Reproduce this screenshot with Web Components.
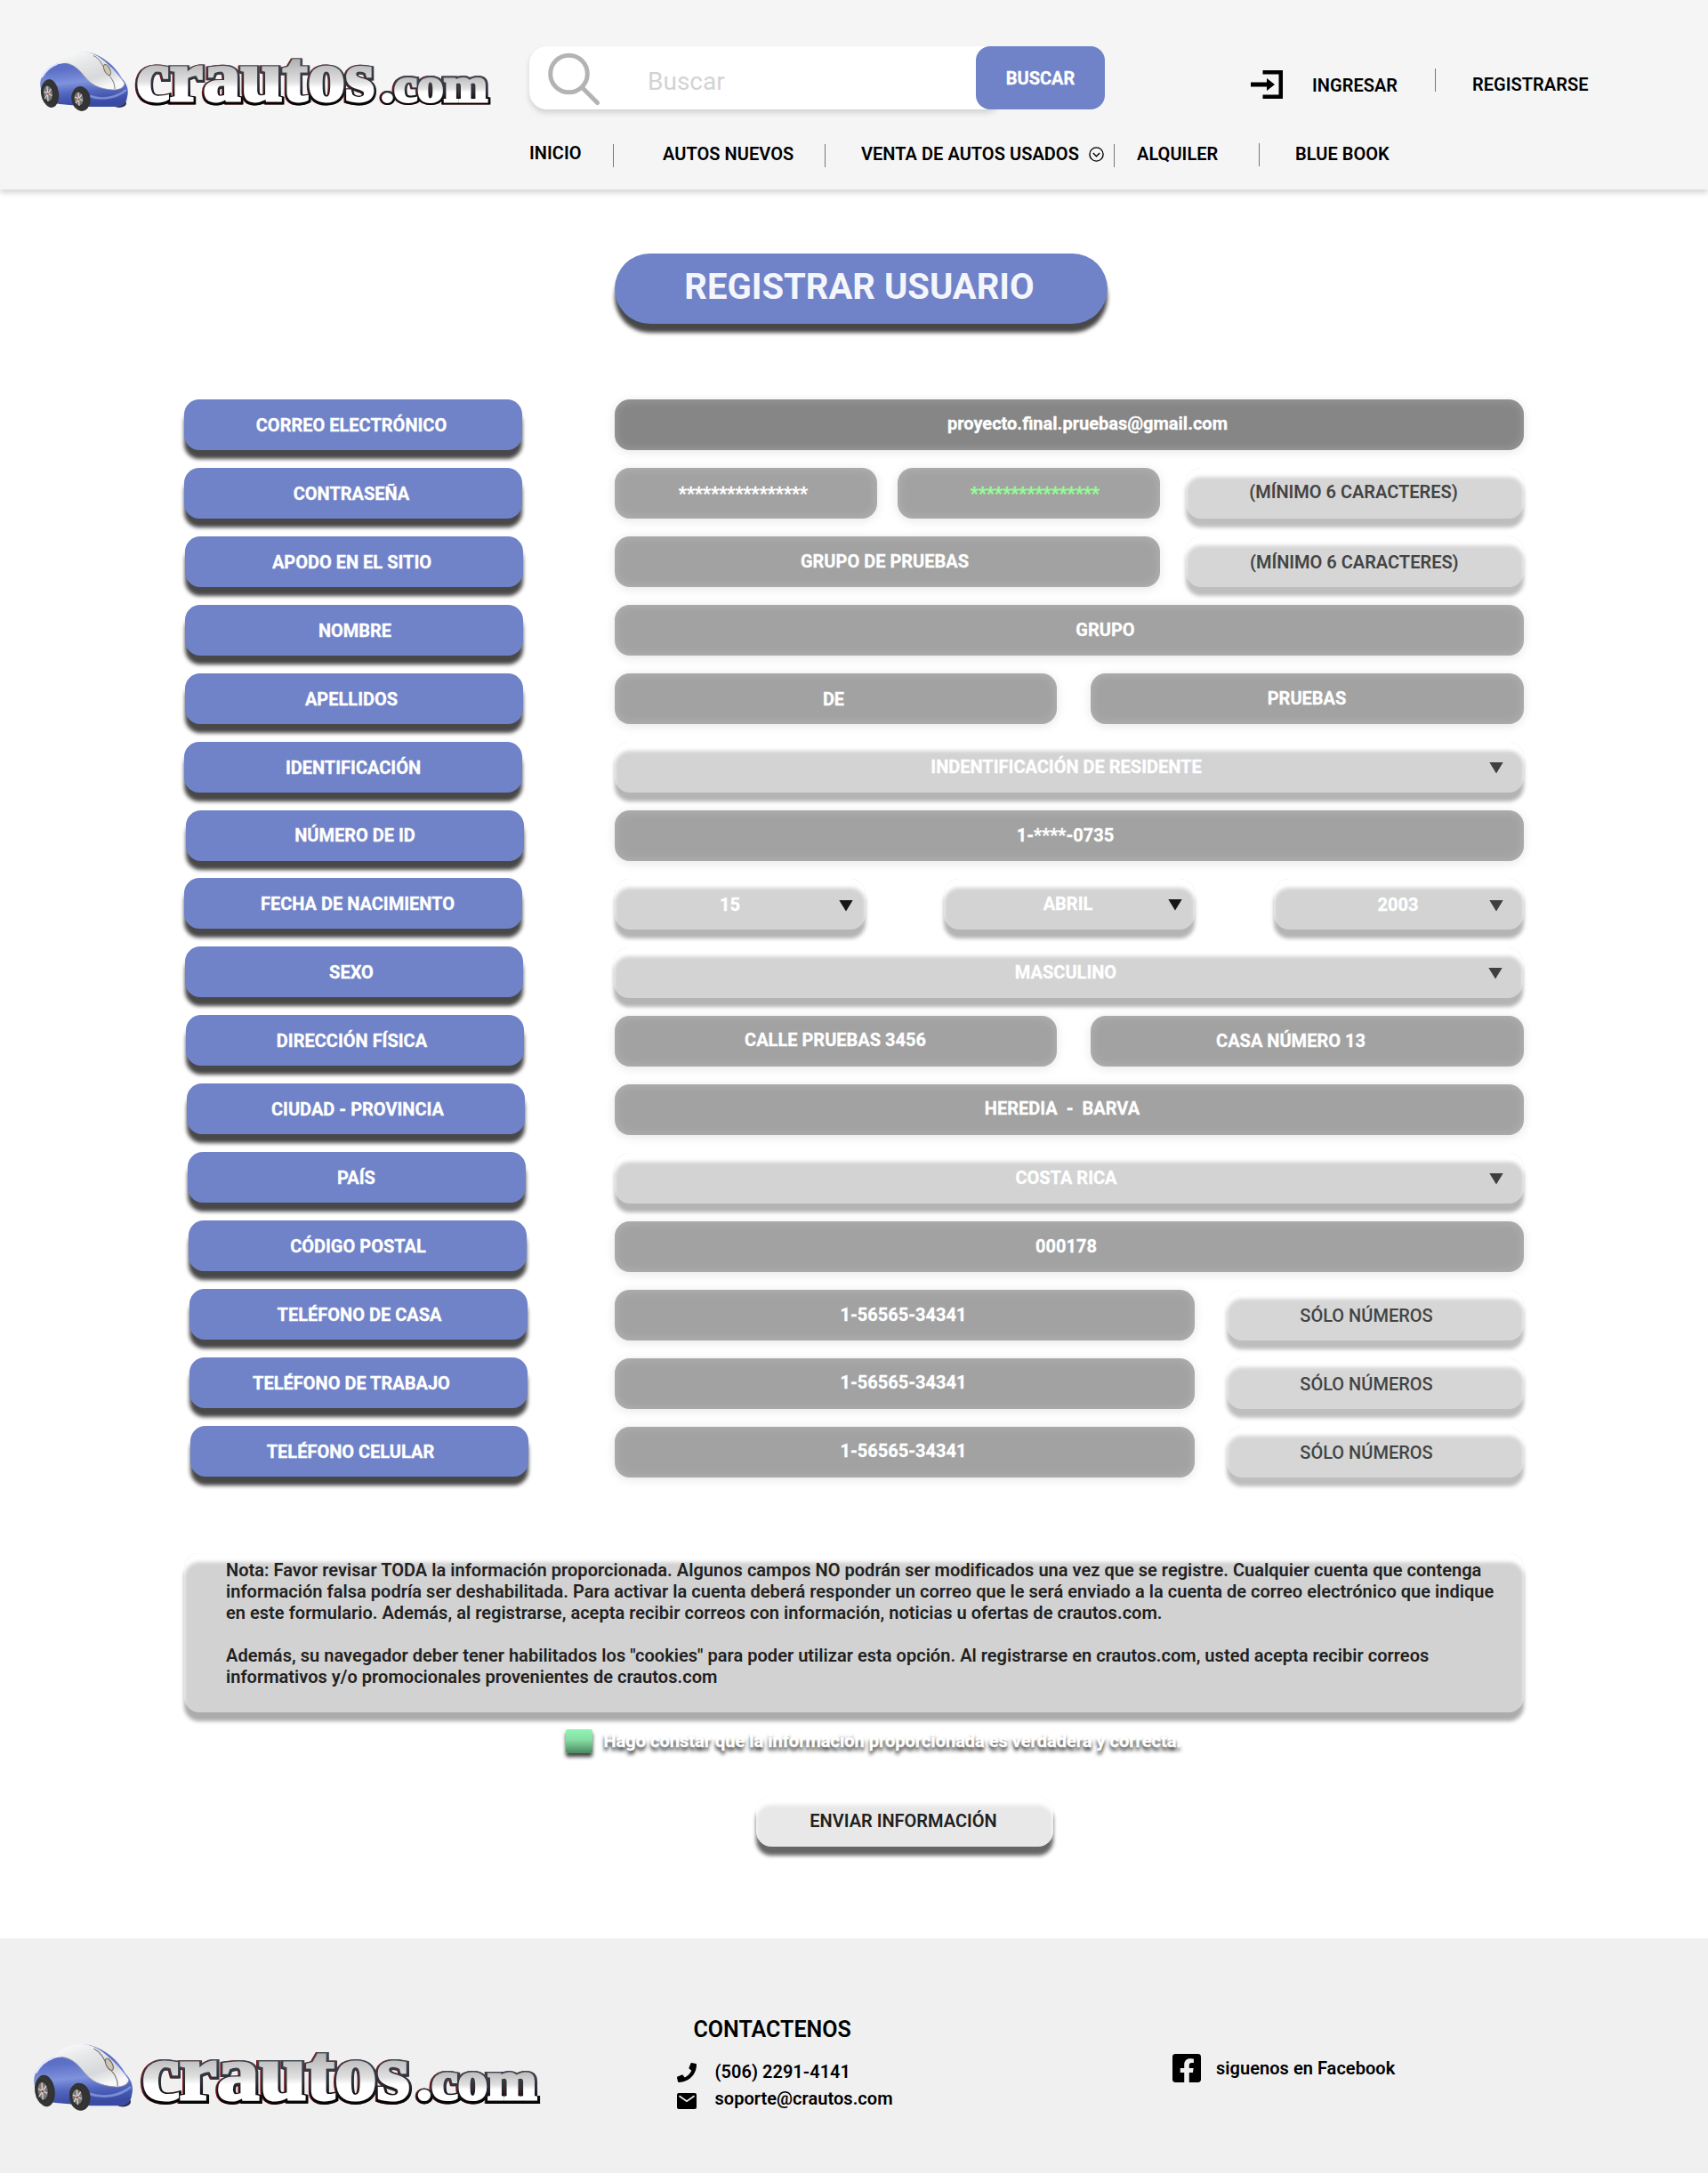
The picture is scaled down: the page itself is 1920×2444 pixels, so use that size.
<!DOCTYPE html>
<html lang="es">
<head>
<meta charset="utf-8">
<title>crautos.com - Registrar usuario</title>
<style>
  html, body { margin: 0; background: #fff; }
  body { width: 1920px; font: 600 20px/24px Roboto, sans-serif; color: #000; }
</style>
</head>
<body>
<cr-page></cr-page>

<script>
const define = (name, html) => {
  const t = document.createElement('template');
  t.innerHTML = html;
  customElements.define(name, class extends HTMLElement {
    constructor() {
      super();
      this.attachShadow({ mode: 'open' }).append(t.content.cloneNode(true));
    }
    connectedCallback() {
      // numeric attributes become CSS lengths
      for (const a of this.attributes)
        if (/^-?[\d.]+$/.test(a.value)) this.style.setProperty('--' + a.name, a.value + 'px');
    }
  });
};

/* Brand: car shaped like a mouse, plus wordmark */
define('cr-logo', `
<style>
  :host { display: block; width: var(--w, 508px); height: var(--h, 68px); flex: none; }
  svg { display: block; width: 100%; height: 100%; overflow: visible; }
  text { font-family: "Liberation Serif", serif; font-weight: 700; }
</style>
<svg viewBox="0 0 508 68" preserveAspectRatio="none">
  <defs>
    <linearGradient id="m" x1="0" y1="0" x2="0" y2="1"><stop offset="0" stop-color="#e8e8e8"/><stop offset=".3" stop-color="#b4b4b4"/><stop offset=".56" stop-color="#e0e0e0"/><stop offset=".64" stop-color="#fff"/><stop offset="1" stop-color="#fff"/></linearGradient>
    <linearGradient id="k" x1="0" y1="0" x2="0" y2="1"><stop offset=".2" stop-color="#4a515e"/><stop offset=".6" stop-color="#2c2f37"/><stop offset=".8" stop-color="#050505"/></linearGradient>
    <linearGradient id="b" x1="0" y1="0" x2=".15" y2="1"><stop offset="0" stop-color="#5a6cc0"/><stop offset=".35" stop-color="#5c70c8"/><stop offset=".6" stop-color="#7f92dc"/><stop offset=".78" stop-color="#5267bf"/><stop offset="1" stop-color="#3a4ba4"/></linearGradient>
    <linearGradient id="w" x1="0" y1="0" x2=".6" y2="1"><stop offset="0" stop-color="#fff"/><stop offset=".4" stop-color="#e6e7e8"/><stop offset=".75" stop-color="#d6d8da"/><stop offset="1" stop-color="#f8f8f8"/></linearGradient>
    <radialGradient id="t"><stop offset="0" stop-color="#888"/><stop offset=".55" stop-color="#777"/><stop offset=".68" stop-color="#2e2e2e"/><stop offset="1" stop-color="#3a3a3a"/></radialGradient>
  </defs>
  <ellipse cx="89" cy="58" rx="8" ry="5" fill="#302a38"/>
  <path d="M1 31C5 22 12 17 20 13C30 2 44-1 56 1C70 5 84 15 92 30C98 36 100 44 98 51C97 58 94 61 88 62H56L22 59C8 57-3 44 1 31Z" fill="url(#b)"/>
  <path d="M18 15C26 4 36 0 48 0C58 0 68 6 76 14C84 21 91 30 95 36C94 41 89 43 82 43C66 42 57 37 50 28C43 19 37 14 28 13C24 13 21 14 18 15Z" fill="url(#w)"/>
  <path d="M95 36C94 41 89 43 82 43C66 42 57 37 50 28C43 19 37 14 28 13" fill="none" stroke="#8d93ab" stroke-width=".8"/>
  <path d="M2 29C7 20 13 16 19 14" fill="none" stroke="#dfe5ff" stroke-width="2"/>
  <path d="M60 4.500C67 8 70 14 74 23C80 29 84 34 84 42" fill="none" stroke="#777" stroke-width="1"/>
  <ellipse cx="75.500" cy="20.500" rx="3" ry="6.500" transform="rotate(-28 75.500 20.500)" fill="#cdc5b3" stroke="#6f685c" stroke-width="1"/>
  <path d="M56 50C70 55 86 52 97 43" fill="none" stroke="#93a4e6" stroke-width="2.500" opacity=".7"/>
  <ellipse cx="11.500" cy="47" rx="9.500" ry="16" transform="rotate(-8 11.500 47)" fill="#333"/>
  <ellipse cx="9" cy="47" rx="8" ry="14" transform="rotate(-8 9 47)" fill="url(#t)"/>
  <ellipse cx="46" cy="53" rx="10.500" ry="14" transform="rotate(-8 46 53)" fill="#333"/>
  <ellipse cx="43.500" cy="53" rx="8" ry="12" transform="rotate(-8 43.500 53)" fill="url(#t)"/>
  <g stroke="#ddd" stroke-width="1.100"><path d="M8 39L9 56M4.500 45L13.500 49.500M5 53L12.500 42"/><path d="M43 46L44 61M39 51L48 55M40 58L47 48"/></g>
  <g fill="#c22"><circle cx="8.800" cy="47.500" r="1.100"/><circle cx="43.500" cy="53.500" r="1.100"/></g>
  <g stroke-linejoin="miter" stroke-miterlimit="3" transform="translate(-.5 .8)">
    <g fill="#7c1518" stroke="#7c1518" stroke-width="7"><text x="108" y="55.500" font-size="80" textLength="268" lengthAdjust="spacingAndGlyphs">crautos</text><text x="383" y="55.500" font-size="54" textLength="120" lengthAdjust="spacingAndGlyphs">.com</text></g>
    <g fill="url(#k)" stroke="url(#k)" stroke-width="7" aria-hidden="true"><text x="109" y="55.500" font-size="80" textLength="268" lengthAdjust="spacingAndGlyphs">crautos</text><text x="384" y="55.500" font-size="54" textLength="120" lengthAdjust="spacingAndGlyphs">.com</text></g>
    <g fill="url(#m)" stroke="url(#m)" stroke-width="2.800" aria-hidden="true"><text x="108.500" y="54.500" font-size="80" textLength="268" lengthAdjust="spacingAndGlyphs">crautos</text><text x="383.500" y="54.800" font-size="54" textLength="120" lengthAdjust="spacingAndGlyphs">.com</text></g>
  </g>
</svg>`);

/* Text with a fixed leading space */
define('cr-text', `
<style>:host { display: block; flex: none; white-space: nowrap; letter-spacing: .04px; margin: var(--mt, 0) 0 0 var(--ml, 0); width: var(--w, auto); }</style><slot></slot>`);

define('cr-sep', `
<style>:host { display: block; flex: none; width: 1px; height: 26px; background: #777; margin: var(--mt, 0) 0 0 var(--ml, 0); }</style>`);

define('cr-search', `
<style>
  :host { display: flex; width: 647px; height: 71px; flex: none; }
  .box { display: flex; width: 532px; margin-right: -30px; box-sizing: border-box; background: #fff; border-radius: 20px; box-shadow: 0 4px 6px rgba(0,0,0,.14); padding-left: 20px; }
  svg { margin-top: 7px; flex: none; }
  .hint { font: 400 28px/33px Roboto, sans-serif; color: #d3d3d3; margin: 23px 0 0 53px; }
  button { position: relative; width: 145px; height: 71px; border: 0; border-radius: 16px; padding: 1px 0 0; background: #7083c8; color: #fff; font: 700 20px/24px Roboto, sans-serif; -webkit-text-stroke: .3px; }
</style>
<div class="box">
  <svg width="60" height="60" viewBox="0 0 60 60" fill="none" stroke="#b3b3b3" stroke-width="5"><circle cx="24.500" cy="24" r="20.800"/><path d="M39 39L56.500 56.500" stroke-linecap="round"/></svg>
  <div class="hint">Buscar</div>
</div>
<button>BUSCAR</button>`);

define('cr-header', `
<style>
  :host { display: flex; height: 213px; background: #f5f5f5; box-shadow: 0 4px 6px rgba(0,0,0,.16); box-sizing: border-box; position: relative; }
  cr-logo { margin: 58px 0 0 45px; }
  .col { margin: 52px 0 0 42px; }
  .row { display: flex; align-items: flex-start; }
  .top { height: 109px; }
  svg { flex: none; }
</style>
<cr-logo></cr-logo>
<div class="col">
  <div class="row top">
    <cr-search></cr-search>
    <svg style="margin:27px 0 0 164px" width="36" height="32" viewBox="0 0 36 32"><path d="M13.500 0H36V32H13.500V27.500H31.500V4.500H13.500ZM0 13.500H18V9L27 16L18 23V18.500H0Z"/></svg>
    <cr-text ml="33" mt="32" w="97">INGRESAR</cr-text>
    <cr-sep ml="41" mt="25"></cr-sep>
    <cr-text ml="41" mt="31">REGISTRARSE</cr-text>
  </div>
  <div class="row">
    <cr-text ml="0" mt="-1" w="59">INICIO</cr-text>
    <cr-sep ml="35" mt="1"></cr-sep>
    <cr-text ml="55" w="149">AUTOS NUEVOS</cr-text>
    <cr-sep ml="33" mt="1"></cr-sep>
    <cr-text ml="40" w="246">VENTA DE AUTOS USADOS</cr-text>
    <svg style="margin:4px 0 0 10px" width="17" height="17" viewBox="0 0 17 17" fill="none" stroke="#000" stroke-width="1.400"><circle cx="8.500" cy="8.500" r="7.600"/><path d="M4.800 7L8.500 10.700L12.200 7"/></svg>
    <cr-sep ml="11" mt="1"></cr-sep>
    <cr-text ml="25" w="92">ALQUILER</cr-text>
    <cr-sep ml="45" mt="0"></cr-sep>
    <cr-text ml="40">BLUE BOOK</cr-text>
  </div>
</div>`);

define('cr-title', `
<style>
  :host { display: block; width: 554px; height: 79px; box-sizing: border-box; margin: 72px 0 0 691px; padding-top: 14px; border-radius: 40px; background: #7083c8; box-shadow: 0 10px 4px #484848; }
  h1 { margin: 0; width: 550px; text-align: center; font: 700 40px/48px Roboto, sans-serif; color: #f5f6fc; }
</style>
<h1><slot></slot></h1>`);

/* Pill: --cx is the centre of its text, --ty the distance of the text from the top */
define('cr-pill', `
<style>
  :host { display: block; flex: none; position: relative; box-sizing: border-box; height: 57px; width: var(--w, 1022px); margin-left: var(--ml, 0); border-radius: 17px; color: #fff; font-weight: 700; -webkit-text-stroke: .3px;
    background: #a2a2a2; box-shadow: inset 0 0 12px rgba(255,255,255,.2), 0 2px 12px rgba(0,0,0,.1); }
  :host([kind=dark]) { background: #868686; }
  :host([kind=label]) { background: #7083c8; box-shadow: 0 10px 4px #484848; }
  :host([kind=hint]) { background: #d6d6d6; color: #444; font-weight: 500; -webkit-text-stroke: 0; box-shadow: inset 0 10px 4px #fff, 0 10px 4px #bebebe; }
  :host([kind=select]) { background: #d3d3d3; box-shadow: inset 0 10px 4px #fff, 0 10px 4px #b4b4b4; }
  :host([kind=send]) { background: #e8e8e8; color: #212121; font-weight: 600; -webkit-text-stroke: 0; box-shadow: inset 0 10px 4px #fff, 0 10px 4px #666; }
  div { width: calc(2 * var(--cx)); padding-top: var(--ty, 17px); text-align: center; white-space: pre; }
  i { display: none; position: absolute; width: 16px; height: 13px; left: var(--arrow); top: calc(var(--ty) + 6.500px); background: var(--tone, #3f3f3f); clip-path: polygon(0 0, 100% 0, 50% 100%); }
  :host([arrow]) i { display: block; }
</style>
<div><slot></slot></div><i></i>`);

define('cr-row', `
<style>
  :host { display: grid; grid-template-columns: 484px 1023px; height: 57px; }
  .f { display: flex; }
</style>
<slot name="label"></slot><div class="f"><slot></slot></div>`);

define('cr-form', `
<style>
  :host { display: flex; flex-direction: column; gap: 20px; margin: 85px 0 0 207px; }
  .up { margin-top: -1px; }
</style>
<cr-row><cr-pill slot="label" kind="label" w="380" cx="188">CORREO ELECTRÓNICO</cr-pill><cr-pill kind="dark" cx="531.500" ty="15">proyecto.final.pruebas@gmail.com</cr-pill></cr-row>
<cr-row><cr-pill slot="label" kind="label" w="380" cx="188">CONTRASEÑA</cr-pill><cr-pill w="295" cx="144.500" ty="17">****************</cr-pill><cr-pill w="295" ml="23" cx="154.500" ty="17" style="color:#98fb98">****************</cr-pill><cr-pill kind="hint" ml="29" w="380" cx="188.500" ty="15" style="font-weight:600">(MÍNIMO 6 CARACTERES)</cr-pill></cr-row>
<cr-row><cr-pill slot="label" kind="label" w="380" ml="1" cx="187.500">APODO EN EL SITIO</cr-pill><cr-pill w="613" cx="303.500" ty="16">GRUPO DE PRUEBAS</cr-pill><cr-pill kind="hint" ml="29" w="380" cx="189.300" ty="17" style="font-weight:600">(MÍNIMO 6 CARACTERES)</cr-pill></cr-row>
<cr-row><cr-pill slot="label" kind="label" w="380" ml="1" cx="191">NOMBRE</cr-pill><cr-pill cx="551.500" ty="16">GRUPO</cr-pill></cr-row>
<cr-row><cr-pill slot="label" kind="label" w="380" ml="1" cx="187">APELLIDOS</cr-pill><cr-pill w="497" cx="246" ty="17">DE</cr-pill><cr-pill w="487" ml="38" cx="243" ty="16">PRUEBAS</cr-pill></cr-row>
<cr-row><cr-pill slot="label" kind="label" w="380" cx="190">IDENTIFICACIÓN</cr-pill><cr-pill kind="select" cx="507.500" ty="16" arrow="983">INDENTIFICACIÓN DE RESIDENTE</cr-pill></cr-row>
<cr-row><cr-pill slot="label" kind="label" w="380" ml="2" cx="190" ty="16">NÚMERO DE ID</cr-pill><cr-pill cx="506.500" ty="16">1-****-0735</cr-pill></cr-row>
<cr-row><cr-pill class="up" slot="label" kind="label" w="380" ml="0" cx="195">FECHA DE NACIMIENTO</cr-pill><cr-pill kind="select" w="281.500" cx="129.500" ty="17" arrow="252" style="--tone:#161616">15</cr-pill><cr-pill kind="select" w="281.500" ml="88.500" cx="139.500" ty="16" arrow="252" style="--tone:#161616">ABRIL</cr-pill><cr-pill kind="select" w="281" ml="89.500" cx="139.500" ty="17" arrow="242">2003</cr-pill></cr-row>
<cr-row><cr-pill class="up" slot="label" kind="label" w="380" ml="1" cx="187">SEXO</cr-pill><cr-pill kind="select" ml="-1" cx="508" ty="16" arrow="983">MASCULINO</cr-pill></cr-row>
<cr-row><cr-pill class="up" slot="label" kind="label" w="380" ml="1.500" cx="187">DIRECCIÓN FÍSICA</cr-pill><cr-pill w="497" cx="248" ty="15">CALLE PRUEBAS 3456</cr-pill><cr-pill w="487" ml="38" cx="225" ty="16">CASA NÚMERO 13</cr-pill></cr-row>
<cr-row><cr-pill class="up" slot="label" kind="label" w="380" ml="3" cx="192">CIUDAD - PROVINCIA</cr-pill><cr-pill cx="503" ty="15">HEREDIA  -  BARVA</cr-pill></cr-row>
<cr-row><cr-pill class="up" slot="label" kind="label" w="380" ml="4" cx="189.500">PAÍS</cr-pill><cr-pill kind="select" cx="507.500" ty="16" arrow="983">COSTA RICA</cr-pill></cr-row>
<cr-row><cr-pill class="up" slot="label" kind="label" w="380" ml="5" cx="190.500">CÓDIGO POSTAL</cr-pill><cr-pill cx="507.500" ty="16">000178</cr-pill></cr-row>
<cr-row><cr-pill class="up" slot="label" kind="label" w="380" ml="6" cx="191">TELÉFONO DE CASA</cr-pill><cr-pill w="652" cx="324.500" ty="16">1-56565-34341</cr-pill><cr-pill kind="hint" w="334" ml="36" cx="157" ty="17">SÓLO NÚMEROS</cr-pill></cr-row>
<cr-row><cr-pill class="up" slot="label" kind="label" w="380" ml="6" cx="182">TELÉFONO DE TRABAJO</cr-pill><cr-pill w="652" cx="324.500" ty="15">1-56565-34341</cr-pill><cr-pill kind="hint" w="334" ml="36" cx="157" ty="17">SÓLO NÚMEROS</cr-pill></cr-row>
<cr-row><cr-pill class="up" slot="label" kind="label" w="380" ml="7" cx="180">TELÉFONO CELULAR</cr-pill><cr-pill w="652" cx="324.500" ty="15">1-56565-34341</cr-pill><cr-pill kind="hint" w="334" ml="36" cx="157" ty="17">SÓLO NÚMEROS</cr-pill></cr-row>`);

define('cr-note', `
<style>
  :host { display: block; box-sizing: border-box; width: 1506px; height: 179px; margin: 85px 0 0 207px; padding: 7px 0 0 47px; border-radius: 17px; background: #d2d2d2; color: #212121; white-space: nowrap; letter-spacing: .03px; box-shadow: inset 0 10px 4px #fff, 0 10px 4px #acacac; }
</style><slot></slot>`);

define('cr-check', `
<style>
  :host { display: flex; align-items: flex-start; height: 27px; margin: 19px 0 0 636px; }
  i { width: 30px; height: 27px; border-radius: 2px; background: linear-gradient(#92f5b3, #85dca3 45%, #4b8862); box-shadow: 0 4px 4px rgba(0,0,0,.75); }
  span { margin: 1px 0 0 12.500px; font-weight: 700; color: #fff; -webkit-text-stroke: .3px; white-space: nowrap; text-shadow: 0 4px 4px rgba(0,0,0,.9); }
</style>
<i></i><span><slot></slot></span>`);

define('cr-footer', `
<style>
  :host { display: flex; align-items: flex-start; height: 264px; margin-top: 103px; background: #f0f0f0; }
  cr-logo { margin: 119px 0 0 38px; }
  .contact { margin: 88px 0 0 152px; width: 400px; }
  h2 { margin: 0 0 0 18.500px; font: 600 25px/30px Roboto, sans-serif; }
  .line { display: flex; align-items: flex-start; }
  .fb { display: flex; align-items: flex-start; margin: 130px 0 0 157px; }
  svg { flex: none; }
</style>
<cr-logo w="571" h="76"></cr-logo>
<div class="contact">
  <h2>CONTACTENOS</h2>
  <div class="line" style="margin-top:20px">
    <svg style="margin-top:2px" width="22" height="22" viewBox="0 0 512 512"><path d="M493.400 24.600l-104-24c-11.300-2.600-22.900 3.300-27.500 13.900l-48 112c-4.200 9.800-1.400 21.300 6.900 28l60.600 49.600c-36 76.700-98.900 140.500-177.200 177.200l-49.600-60.600c-6.800-8.300-18.200-11.100-28-6.900l-112 48C3.900 366.500-2 378.100.600 389.400l24 104C27.100 504.200 36.700 512 48 512c256.100 0 464-207.500 464-464 0-11.200-7.700-20.900-18.600-23.400z"/></svg>
    <cr-text ml="20.500">(506) 2291-4141</cr-text>
  </div>
  <div class="line" style="margin-top:6px">
    <svg style="margin-top:6px" width="22" height="18" viewBox="0 0 22 18"><rect width="22" height="18" rx="2"/><path d="M2.500 3.200L11 9.200L19.500 3.200" fill="none" stroke="#f0f0f0" stroke-width="1.700"/></svg>
    <cr-text ml="20.500">soporte@crautos.com</cr-text>
  </div>
</div>
<div class="fb">
  <svg width="32" height="32" viewBox="0 0 448 448"><path d="M400 0H48A48 48 0 0 0 0 48v352a48 48 0 0 0 48 48h137.250V295.690h-63V224h63v-54.640c0-62.150 37-96.480 93.670-96.480 27.140 0 55.520 4.840 55.520 4.840v61h-31.270c-30.810 0-40.420 19.120-40.420 38.730V224h68.780l-11 71.690h-57.780V448H400a48 48 0 0 0 48-48V48a48 48 0 0 0-48-48z"/></svg>
  <cr-text ml="17" mt="4">siguenos en Facebook</cr-text>
</div>`);

define('cr-page', `
<style>:host { display: flow-root; width: 1920px; height: 2444px; overflow: hidden; }
  cr-pill { margin: 48px 0 0 850px; }</style>
<cr-header></cr-header>
<cr-title>REGISTRAR USUARIO</cr-title>
<cr-form></cr-form>
<cr-note>Nota: Favor revisar TODA la información proporcionada. Algunos campos NO podrán ser modificados una vez que se registre. Cualquier cuenta que contenga<br>información falsa podría ser deshabilitada. Para activar la cuenta deberá responder un correo que le será enviado a la cuenta de correo electrónico que indique<br>en este formulario. Además, al registrarse, acepta recibir correos con información, noticias u ofertas de crautos.com.<br><br>Además, su navegador deber tener habilitados los "cookies" para poder utilizar esta opción. Al registrarse en crautos.com, usted acepta recibir correos<br>informativos y/o promocionales provenientes de crautos.com</cr-note>
<cr-check>Hago constar que la información proporcionada es verdadera y correcta.</cr-check>
<cr-pill kind="send" w="334" cx="165.500" ty="16">ENVIAR INFORMACIÓN</cr-pill>
<cr-footer></cr-footer>`);
</script>
</body>
</html>
